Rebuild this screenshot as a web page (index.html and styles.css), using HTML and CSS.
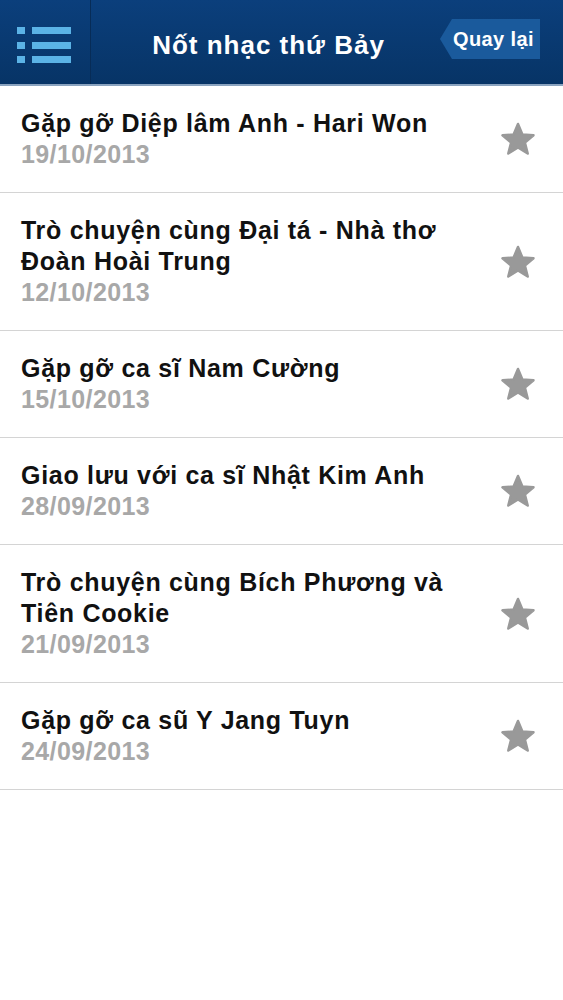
FILE: index.html
```html
<!DOCTYPE html>
<html lang="vi">

<head>
    <meta charset="UTF-8">
    <meta name="viewport" content="width=device-width, initial-scale=1.0">
    <title>Nốt nhạc thứ Bảy</title>
    <link rel="stylesheet" href="styles.css">
</head>

<body>
    <div id="header">
        <span class="menu-btn">
            <svg width="56" height="38" viewBox="0 0 56 38">
                <rect x="0" y="0" width="8" height="7" fill="#5bb3e6" />
                <rect x="15" y="0" width="39" height="7" fill="#5bb3e6" />
                <rect x="0" y="15" width="8" height="7" fill="#5bb3e6" />
                <rect x="15" y="15" width="39" height="7" fill="#5bb3e6" />
                <rect x="0" y="29" width="8" height="7" fill="#5bb3e6" />
                <rect x="15" y="29" width="39" height="7" fill="#5bb3e6" />
            </svg>
        </span>
        <h1 class="title">Nốt nhạc thứ Bảy</h1>
        <span class="back-btn">Quay lại</span>
    </div>
    <ul id="list">
        <li>
            <div class="info">
                <p class="name">Gặp gỡ Diệp lâm Anh - Hari Won</p>
                <p class="date">19/10/2013</p>
            </div>
            <svg class="star" viewBox="0 0 36 34"><polygon points="18,2 22.4,12.6 33.5,13.2 24.9,20.6 27.7,31.5 18,25.4 8.3,31.5 11.1,20.6 2.5,13.2 13.6,12.6" /></svg>
        </li>
        <li>
            <div class="info">
                <p class="name">Trò chuyện cùng Đại tá - Nhà thơ Đoàn Hoài Trung</p>
                <p class="date">12/10/2013</p>
            </div>
            <svg class="star" viewBox="0 0 36 34"><polygon points="18,2 22.4,12.6 33.5,13.2 24.9,20.6 27.7,31.5 18,25.4 8.3,31.5 11.1,20.6 2.5,13.2 13.6,12.6" /></svg>
        </li>
        <li>
            <div class="info">
                <p class="name">Gặp gỡ ca sĩ Nam Cường</p>
                <p class="date">15/10/2013</p>
            </div>
            <svg class="star" viewBox="0 0 36 34"><polygon points="18,2 22.4,12.6 33.5,13.2 24.9,20.6 27.7,31.5 18,25.4 8.3,31.5 11.1,20.6 2.5,13.2 13.6,12.6" /></svg>
        </li>
        <li>
            <div class="info">
                <p class="name">Giao lưu với ca sĩ Nhật Kim Anh</p>
                <p class="date">28/09/2013</p>
            </div>
            <svg class="star" viewBox="0 0 36 34"><polygon points="18,2 22.4,12.6 33.5,13.2 24.9,20.6 27.7,31.5 18,25.4 8.3,31.5 11.1,20.6 2.5,13.2 13.6,12.6" /></svg>
        </li>
        <li>
            <div class="info">
                <p class="name">Trò chuyện cùng Bích Phương và Tiên Cookie</p>
                <p class="date">21/09/2013</p>
            </div>
            <svg class="star" viewBox="0 0 36 34"><polygon points="18,2 22.4,12.6 33.5,13.2 24.9,20.6 27.7,31.5 18,25.4 8.3,31.5 11.1,20.6 2.5,13.2 13.6,12.6" /></svg>
        </li>
        <li>
            <div class="info">
                <p class="name">Gặp gỡ ca sũ Y Jang Tuyn</p>
                <p class="date">24/09/2013</p>
            </div>
            <svg class="star" viewBox="0 0 36 34"><polygon points="18,2 22.4,12.6 33.5,13.2 24.9,20.6 27.7,31.5 18,25.4 8.3,31.5 11.1,20.6 2.5,13.2 13.6,12.6" /></svg>
        </li>
    </ul>
</body>

</html>
```

FILE: styles.css
```css
* {
    margin: 0;
    padding: 0;
}

body {
    background: #fff;
    font-family: "Liberation Sans", Arial, sans-serif;
}

li {
    list-style: none;
}

#header {
    height: 84px;
    display: flex;
    align-items: center;
    background: linear-gradient(#0b3f7c, #073466);
    border-bottom: 2px solid #8aa3bf;
}

.menu-btn {
    width: 91px;
    height: 84px;
    box-sizing: border-box;
    padding-left: 17px;
    display: flex;
    align-items: center;
    border-right: 1px solid #072c57;
}

.menu-btn svg {
    display: block;
    margin-top: 7px;
}

.title {
    flex: 1;
    text-align: center;
    color: #fff;
    font-size: 26px;
    letter-spacing: 1px;
    font-weight: bold;
    margin-left: 6px;
    margin-top: 6px;
}

.back-btn {
    height: 40px;
    line-height: 40px;
    margin-right: 23px;
    margin-top: -6px;
    padding: 0 6px 0 13px;
    color: #fff;
    font-size: 20px;
    letter-spacing: 0.4px;
    font-weight: bold;
    background: #1a5a9c;
    clip-path: polygon(12px 0, 100% 0, 100% 100%, 12px 100%, 0 50%);
}

#list li {
    display: flex;
    align-items: center;
    padding: 22px 27px 22px 21px;
    border-bottom: 1px solid #d4d4d4;
}

.info {
    flex: 1;
}

.name {
    font-size: 25px;
    letter-spacing: 0.7px;
    font-weight: bold;
    line-height: 31px;
    color: #111;
    padding-right: 20px;
}

.date {
    font-size: 25px;
    letter-spacing: 0.4px;
    font-weight: bold;
    line-height: 31px;
    color: #a8a8a8;
}

.star {
    display: block;
    width: 36px;
    height: 34px;
    fill: #999;
    stroke: #999;
    stroke-width: 2.5;
    stroke-linejoin: round;
}
```
